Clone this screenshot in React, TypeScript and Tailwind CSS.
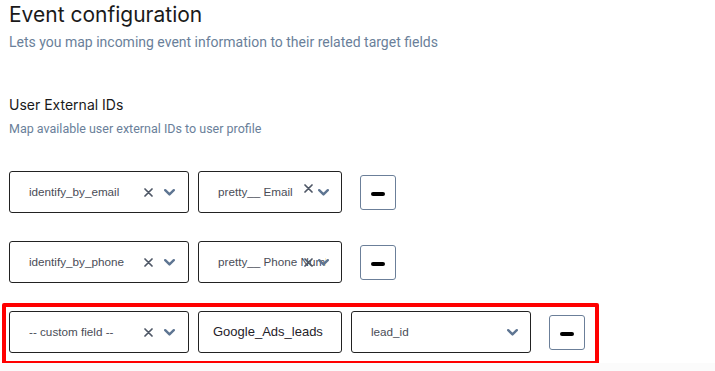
import { FC, ReactNode } from "react";

const heading = { fontFamily: '"Inter", "Open Sans", sans-serif' };
const roboto = { fontFamily: 'Roboto, "Noto Sans", sans-serif' };
const arial = { fontFamily: '"Liberation Sans", Arial, sans-serif' };

const Chevron = () => (
	<svg width="11" height="7" viewBox="0 0 11 7" className="shrink-0">
		<polyline
			points="1.2,1.2 5.5,5.4 9.8,1.2"
			fill="none"
			stroke="#5e7592"
			strokeWidth="2.4"
			strokeLinecap="round"
			strokeLinejoin="round"
		/>
	</svg>
);

const Cross = ({ raised }: { raised?: boolean }) => (
	<svg
		width="9"
		height="9"
		viewBox="0 0 9 9"
		className={`shrink-0 ${raised ? "-mt-[7px]" : ""}`}
	>
		<path
			d="M1 1 L8 8 M8 1 L1 8"
			stroke="#4f5766"
			strokeWidth="1.7"
			strokeLinecap="round"
		/>
	</svg>
);

const SelectBox: FC<{
	value: string;
	width: string;
	clearable?: boolean;
	narrow?: boolean;
	raised?: boolean;
}> = ({ value, width, clearable, narrow, raised }) => (
	<div
		className={`${width} h-[42px] shrink-0 flex items-center border border-[#222] rounded-[3px] bg-white pl-[19px] ${
			narrow ? "pr-[12px]" : "pr-[13px]"
		}`}
	>
		<span
			className={`flex-1 min-w-0 overflow-hidden whitespace-nowrap text-[11.7px] text-[#4a4d57] ${
				narrow ? "-mr-[22px]" : ""
			}`}
			style={arial}
		>
			{value}
		</span>
		{clearable && <Cross raised={raised} />}
		<span className={clearable ? (narrow ? "ml-[5px]" : "ml-[11px]") : ""}>
			<Chevron />
		</span>
	</div>
);

const MinusButton = () => (
	<button className="ml-[9px] w-[36px] h-[35px] shrink-0 flex items-center justify-center border border-[#6b7f99] rounded-[3px] bg-white pt-[4px]">
		<span className="block w-[14px] h-[4px] rounded-full bg-black" />
	</button>
);

const Row: FC<{ children: ReactNode; className?: string }> = ({
	children,
	className,
}) => <div className={`flex items-center gap-[9px] ${className ?? ""}`}>{children}</div>;

export default function App() {
	return (
		<div className="w-[715px] h-[371px] bg-white overflow-hidden flex flex-col relative">
			<div className="pl-[9px] pt-[2px] flex flex-col">
				<h1 className="text-[21px] leading-[25px] text-[#1a1a1a] font-normal" style={heading}>
					Event configuration
				</h1>
				<p className="mt-[5px] text-[14px] leading-[20px] text-[#6a7f9a]" style={roboto}>
					Lets you map incoming event information to their related target fields
				</p>
				<h2 className="mt-[43px] text-[14px] leading-[20px] text-[#1a1a1a]" style={heading}>
					User External IDs
				</h2>
				<p className="mt-[6px] text-[12.5px] leading-[16px] text-[#6a7f9a]" style={roboto}>
					Map available user external IDs to user profile
				</p>

				<Row className="mt-[34px]">
					<SelectBox value="identify_by_email" width="w-[180px]" clearable />
					<SelectBox value="pretty__ Email" width="w-[144px]" clearable narrow raised />
					<MinusButton />
				</Row>

				<Row className="mt-[28px]">
					<SelectBox value="identify_by_phone" width="w-[180px]" clearable />
					<SelectBox value="pretty__ Phone Number" width="w-[144px]" clearable narrow />
					<MinusButton />
				</Row>
			</div>

			<div className="mt-[20px] ml-[2px] w-[597px] h-[62px] border-[4px] border-[#ff0000] rounded-[2px] pl-[3px] pt-[4px]">
				<Row>
					<SelectBox value="-- custom field --" width="w-[180px]" clearable />
					<div className="w-[144px] h-[42px] shrink-0 flex items-center border border-[#222] rounded-[3px] bg-white pl-[14px]">
						<span className="text-[13px] text-[#1f2229]" style={arial}>
							Google_Ads_leads
						</span>
					</div>
					<SelectBox value="lead_id" width="w-[180px]" narrow />
					<MinusButton />
				</Row>
			</div>
			<div className="absolute left-0 right-0 bottom-0 h-[8px] bg-[#fbfbfb]" />
		</div>
	);
}
